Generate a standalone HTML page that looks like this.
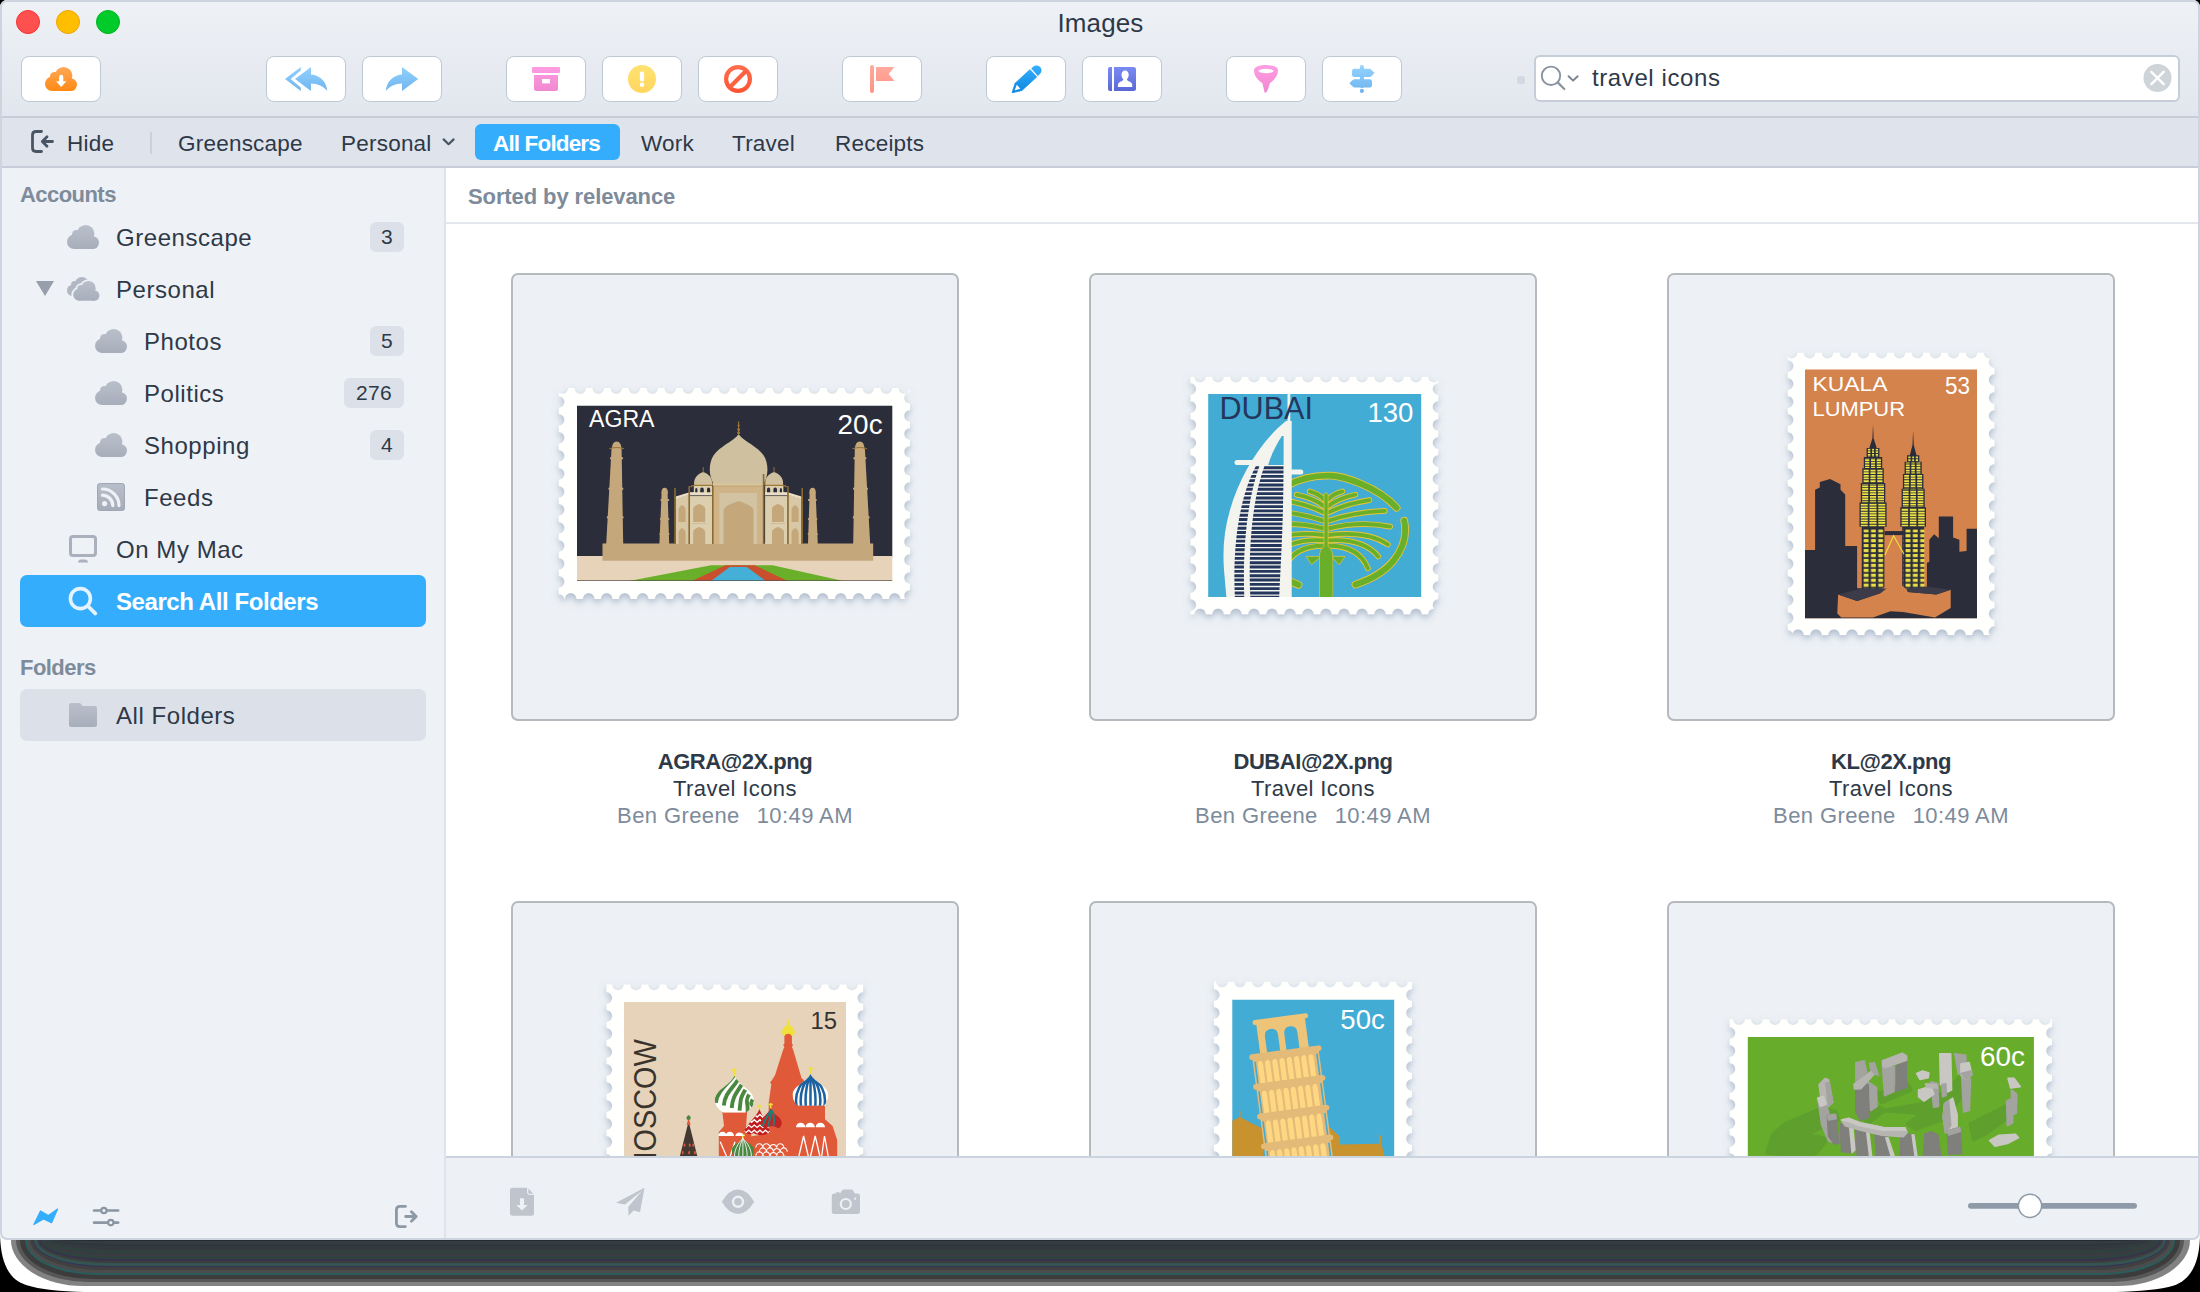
<!DOCTYPE html>
<html><head><meta charset="utf-8"><title>Images</title>
<style>
*{box-sizing:border-box;margin:0;padding:0}
html{background:#000}
html,body{width:2200px;height:1292px;overflow:hidden;font-family:"Liberation Sans",sans-serif;color:#2e3948}
.abs{position:absolute}
.bd{position:absolute;top:1240px;z-index:-1}
#win{position:absolute;left:0;top:0;width:2200px;height:1240px;border-radius:7px;background:#cdd4df;overflow:hidden}
#inner{position:absolute;left:0;top:0;width:2200px;height:1240px;border-radius:7px;overflow:hidden;background:#fff}
#frame{position:absolute;left:0;top:0;width:2200px;height:1240px;border-radius:7px;box-shadow:inset 0 0 0 2px #cdd4df;pointer-events:none}
#titlebar{position:absolute;left:0;top:0;width:100%;height:116px;background:linear-gradient(#eef1f5,#e2e6ee)}
#tbline{position:absolute;left:0;top:116px;width:100%;height:2px;background:#c6cdd9}
#tabbar{position:absolute;left:0;top:118px;width:100%;height:48px;background:#dfe3ec}
#tabline{position:absolute;left:0;top:166px;width:100%;height:2px;background:#c6cdd9}
.tl{position:absolute;top:10px;width:24px;height:24px;border-radius:50%}
.tbtn{position:absolute;top:56px;width:80px;height:46px;background:#fff;border:1.500px solid #bfc8d5;border-radius:8px}
.tbtn svg{position:absolute;left:0;top:0}
.tab{position:absolute;top:128.500px;font-size:22.500px;line-height:30px;white-space:nowrap;letter-spacing:.22px}
#sidebar{position:absolute;left:0;top:168px;width:444px;height:1072px;background:#eef1f5}
#sideline{position:absolute;left:444px;top:168px;width:2px;height:1072px;background:#dfe4ec}
.sh{position:absolute;left:18px;font-size:22px;font-weight:bold;color:#7d8b9b;line-height:28px;letter-spacing:-.55px}
.si{position:absolute;margin-top:1px;font-size:24px;line-height:32px;white-space:nowrap;letter-spacing:.55px}
.badge{position:absolute;height:30px;background:#dce1e9;border-radius:6px;font-size:21px;line-height:30px;text-align:center;letter-spacing:.3px}
#content{position:absolute;left:446px;top:168px;width:1754px;height:989px;background:#fff;overflow:hidden}
.card{position:absolute;width:448px;height:448px;background:#edf1f5;border:2px solid #b6b9bd;border-radius:7px;overflow:hidden}
.cap{position:absolute;width:448px;text-align:center;font-size:22px;line-height:27px;white-space:nowrap;letter-spacing:.4px}
.cap b{font-weight:bold;letter-spacing:-.45px}
.cap .m{color:#7d8b9b}
#bottombar{position:absolute;left:446px;top:1156px;width:1754px;height:84px;background:#edf1f5;border-top:2px solid #cbd3de}
</style></head><body>
<div id="win"><div id="inner">
 <div id="titlebar"></div><div id="tbline"></div><div id="tabbar"></div><div id="tabline"></div>
 <div class="tl" style="left:16px;background:#ff5050;border:1px solid #f9302e"></div>
 <div class="tl" style="left:56px;background:#ffbe00;border:1px solid #f0a500"></div>
 <div class="tl" style="left:96px;background:#00cb2a;border:1px solid #00b31c"></div>
 <div class="abs" style="left:1057.500px;top:6px;font-size:26px;line-height:34px;letter-spacing:.1px;color:#2e3948">Images</div>

 <div class="tbtn" style="left:21px" id="b1"></div>
 <div class="tbtn" style="left:266px" id="b2"></div>
 <div class="tbtn" style="left:362px" id="b3"></div>
 <div class="tbtn" style="left:506px" id="b4"></div>
 <div class="tbtn" style="left:602px" id="b5"></div>
 <div class="tbtn" style="left:698px" id="b6"></div>
 <div class="tbtn" style="left:842px" id="b7"></div>
 <div class="tbtn" style="left:986px" id="b8"></div>
 <div class="tbtn" style="left:1082px" id="b9"></div>
 <div class="tbtn" style="left:1226px" id="b10"></div>
 <div class="tbtn" style="left:1322px" id="b11"></div>
 <div class="abs" id="search" style="left:1534px;top:54.500px;width:646px;height:47px;background:#fff;border:2px solid #c5cdd9;border-radius:6px"></div>
 <div class="abs" style="left:1592px;top:62px;font-size:24px;line-height:32px;letter-spacing:.6px;color:#2e3948">travel icons</div>

 <div class="tab" style="left:67px">Hide</div>
 <div class="abs" style="left:150px;top:132px;width:2px;height:22px;background:#cbd1db"></div>
 <div class="tab" style="left:178px">Greenscape</div>
 <div class="tab" style="left:341px">Personal</div>
 <div class="abs" style="left:475px;top:124px;width:145px;height:36px;border-radius:6px;background:#34aefc"></div>
 <div class="tab" style="left:493px;color:#fff;font-weight:bold;letter-spacing:-.85px">All Folders</div>
 <div class="tab" style="left:641px">Work</div>
 <div class="tab" style="left:732px">Travel</div>
 <div class="tab" style="left:835px">Receipts</div>

 <svg class="abs" style="left:0;top:50px" width="2200" height="60" viewBox="0 50 2200 60">
  <defs>
   <linearGradient id="gor" gradientUnits="userSpaceOnUse" x1="0" y1="0" x2="0" y2="24"><stop offset="0" stop-color="#ffa858"/><stop offset="1" stop-color="#ff8a14"/></linearGradient>
   <linearGradient id="gbl" gradientUnits="userSpaceOnUse" x1="0" y1="66" x2="0" y2="92"><stop offset="0" stop-color="#92d2ff"/><stop offset="1" stop-color="#6fb4ee"/></linearGradient>
   <linearGradient id="gpk" gradientUnits="userSpaceOnUse" x1="0" y1="66" x2="0" y2="92"><stop offset="0" stop-color="#ff9ce2"/><stop offset="1" stop-color="#f088d0"/></linearGradient>
   <linearGradient id="gye" gradientUnits="userSpaceOnUse" x1="0" y1="65" x2="0" y2="93"><stop offset="0" stop-color="#ffe272"/><stop offset="1" stop-color="#ffd65e"/></linearGradient>
   <linearGradient id="grd" gradientUnits="userSpaceOnUse" x1="0" y1="65" x2="0" y2="93"><stop offset="0" stop-color="#ff6e4e"/><stop offset="1" stop-color="#ff5232"/></linearGradient>
   <linearGradient id="gfl" gradientUnits="userSpaceOnUse" x1="0" y1="65" x2="0" y2="93"><stop offset="0" stop-color="#ffaa9e"/><stop offset="1" stop-color="#ff9286"/></linearGradient>
   <linearGradient id="gpn" gradientUnits="userSpaceOnUse" x1="0" y1="65" x2="0" y2="93"><stop offset="0" stop-color="#38b0ff"/><stop offset="1" stop-color="#0a86dc"/></linearGradient>
   <linearGradient id="gbk" gradientUnits="userSpaceOnUse" x1="0" y1="67" x2="0" y2="91"><stop offset="0" stop-color="#7a8af2"/><stop offset="1" stop-color="#5a68d6"/></linearGradient>
  </defs>
  <!-- 1 cloud download -->
  <g transform="translate(45,67)"><use href="#cloud" fill="url(#gor)"/><path d="M16.200 7.800Q18.300 7.800 18.300 9.900V14.300H21.400L16.200 20L11 14.300H14.100V9.900Q14.100 7.800 16.200 7.800Z" fill="#fff"/></g>
  <!-- 2 reply all -->
  <path d="M285 79L300.800 66.900V70.600L290.600 79L300.800 87.400V91Z" fill="url(#gbl)"/>
  <path d="M295 79L311 66.900V74.600C320.500 75.600 326.600 82 327.200 91C323 86 318 83.600 311 83.400V91Z" fill="url(#gbl)"/>
  <!-- 3 forward -->
  <path d="M418.200 79L402 66.900V74.600C392.500 75.600 386.400 82 385.900 91C390 86 395 83.600 402 83.400V91Z" fill="url(#gbl)"/>
  <!-- 4 archive -->
  <rect x="532" y="67" width="28" height="6" rx="1" fill="url(#gpk)"/>
  <path d="M534 75H558V88.500Q558 91 555.500 91H536.500Q534 91 534 88.500Z" fill="url(#gpk)"/><rect x="542" y="79" width="8" height="4.400" fill="#fff"/>
  <!-- 5 alert -->
  <circle cx="642" cy="79" r="14" fill="url(#gye)"/><rect x="639.900" y="71.400" width="4.200" height="10.200" rx="2.100" fill="#fff"/><circle cx="642" cy="84.700" r="2.300" fill="#fff"/>
  <!-- 6 block -->
  <circle cx="738" cy="79" r="11.900" fill="none" stroke="url(#grd)" stroke-width="4.200"/><path d="M729.800 87.200L746.200 70.800" stroke="#ff6040" stroke-width="4.200"/>
  <!-- 7 flag -->
  <rect x="870" y="65" width="4" height="28" rx="2" fill="url(#gfl)"/><path d="M876 67.600Q876 67 876.600 67H893.200Q894.400 67 893.600 67.900L888.600 74L893.600 80.100Q894.400 81 893.200 81H876.600Q876 81 876 80.400Z" fill="url(#gfl)"/>
  <!-- 8 pencil -->
  <path d="M1012.1 92.7L1015.1 83.2L1030.0 69.6L1036.7 77.0L1021.8 90.6Z" fill="url(#gpn)" stroke="url(#gpn)" stroke-width=".8" stroke-linejoin="round"/><path d="M1031.2 68.5L1033.1 66.8L1033.1 66.8L1034.2 66.0L1035.4 65.6L1036.7 65.5L1038.0 65.7L1039.2 66.2L1040.2 67.1L1040.9 68.1L1041.4 69.4L1041.5 70.7L1041.2 72.0L1040.7 73.1L1039.8 74.1L1039.8 74.1L1037.9 75.9Z" fill="url(#gpn)"/><path d="M1014.6 90.4L1016.8 84.8L1020.4 88.8Z" fill="#fff"/>
  <!-- 9 contacts -->
  <path d="M1110 67H1112V91H1110Q1108 91 1108 89V69Q1108 67 1110 67Z" fill="url(#gbk)"/>
  <path d="M1114 67H1133.500Q1136 67 1136 69.500V88.500Q1136 91 1133.500 91H1114Z" fill="url(#gbk)"/>
  <path d="M1125.100 70.600C1127.300 70.600 1128.700 72.300 1128.700 74.700C1128.700 76.600 1128 78.200 1127 79.100C1127 80.300 1127.400 80.800 1128.600 81.300C1130.800 82.100 1132.300 82.900 1132.300 85.200V87H1117.900V85.200C1117.900 82.900 1119.400 82.100 1121.600 81.300C1122.800 80.800 1123.200 80.300 1123.200 79.100C1122.200 78.200 1121.500 76.600 1121.500 74.700C1121.500 72.300 1122.900 70.600 1125.100 70.600Z" fill="#fff"/>
  <!-- 10 funnel -->
  <path d="M1254 70.200C1254 63.300 1278 63.300 1278 70.200C1278 76 1274 80.300 1270 83L1267.600 90.200Q1266.200 93.200 1264.700 92.800L1262.300 83C1258 80.300 1254 76 1254 70.200Z" fill="url(#gpk)"/><ellipse cx="1266" cy="71" rx="7.600" ry="2.200" fill="#fff"/>
  <!-- 11 signpost -->
  <g fill="url(#gbl)"><rect x="1359.900" y="65" width="4" height="23" rx="2"/><circle cx="1361.900" cy="90.900" r="2.100"/>
  <path d="M1354.500 68.800H1369.500Q1370.300 68.800 1371 69.400L1374 72.200Q1374.800 72.900 1374 73.600L1371 76.400Q1370.300 77 1369.500 77H1354.500Q1352 77 1352 74.500V71.300Q1352 68.800 1354.500 68.800Z"/>
  <path d="M1369.500 79.200H1354.500Q1353.700 79.200 1353 79.800L1350 82.600Q1349.200 83.300 1350 84L1353 86.800Q1353.700 87.400 1354.500 87.400H1369.500Q1372 87.400 1372 84.900V81.700Q1372 79.200 1369.500 79.200Z"/></g>
  <!-- search -->
  <rect x="1517" y="76" width="8" height="8" rx="2.500" fill="#d3d9e3"/>
  <circle cx="1551" cy="75.800" r="9.200" fill="none" stroke="#8a929e" stroke-width="1.900"/><path d="M1557.700 82.400L1564.300 89" stroke="#8a929e" stroke-width="2.200" stroke-linecap="round"/>
  <path d="M1568.600 76.200L1573.100 80.600L1577.600 76.200" fill="none" stroke="#7c8692" stroke-width="2" stroke-linecap="round" stroke-linejoin="round"/>
  <circle cx="2157.500" cy="78" r="14" fill="#cfd4d8"/><path d="M2151.300 71.800L2163.700 84.200M2163.700 71.800L2151.300 84.200" stroke="#fff" stroke-width="2.400" stroke-linecap="round"/>
 </svg>
 <!-- tabbar icons -->
 <svg class="abs" style="left:28px;top:128px" width="30" height="28" viewBox="28 128 30 28"><g fill="none" stroke="#4a5564" stroke-width="2.800" stroke-linecap="round" stroke-linejoin="round"><path d="M41.500 131.500H36Q32.500 131.500 32.500 135V148Q32.500 151.500 36 151.500H41.500"/><path d="M52.500 141.500H42.500M47 136.800L42.300 141.500L47 146.200"/></g></svg>
 <svg class="abs" style="left:440px;top:134px" width="18" height="14" viewBox="440 134 18 14"><path d="M443.600 139.400L448.600 144.200L453.600 139.400" fill="none" stroke="#4a5564" stroke-width="2.200" stroke-linecap="round" stroke-linejoin="round"/></svg>
 <div id="sidebar"></div><div id="sideline"></div>
 <svg width="0" height="0" style="position:absolute"><defs>
  <linearGradient id="gcl" gradientUnits="userSpaceOnUse" x1="0" y1="0" x2="0" y2="26"><stop offset="0" stop-color="#b9bfca"/><stop offset="1" stop-color="#a6adba"/></linearGradient>
  <g id="cloud"><circle cx="7.2" cy="16.8" r="7.2"/><circle cx="9.6" cy="9.6" r="4.6"/><circle cx="18.6" cy="8.8" r="8.8"/><circle cx="25.6" cy="17.6" r="6.4"/><rect x="7" y="12" width="19" height="12"/></g>
 </defs></svg>
 <div class="sh" style="top:180.700px;left:20px">Accounts</div>

 <svg class="abs" style="left:67px;top:225px" width="32" height="24" viewBox="0 0 32 24"><use href="#cloud" fill="url(#gcl)"/></svg>
 <div class="si" style="left:116px;top:221px">Greenscape</div>
 <div class="badge" style="left:370px;top:222px;width:34px">3</div>

 <svg class="abs" style="left:36px;top:281px" width="18" height="15" viewBox="0 0 18 15"><path d="M0 0H18L9 15Z" fill="#979fac"/></svg>
 <svg class="abs" style="left:66px;top:276px" width="34" height="26" viewBox="0 0 34 26">
  <g transform="translate(1,1) scale(0.8)"><use href="#cloud" fill="#b1b8c4"/></g>
  <g transform="translate(7.2,5) scale(0.82)"><use href="#cloud" fill="#eef1f5" stroke="#eef1f5" stroke-width="4.5"/><use href="#cloud" fill="url(#gcl)"/></g>
 </svg>
 <div class="si" style="left:116px;top:273px">Personal</div>

 <svg class="abs" style="left:95px;top:329px" width="32" height="24" viewBox="0 0 32 24"><use href="#cloud" fill="url(#gcl)"/></svg>
 <div class="si" style="left:144px;top:325px">Photos</div>
 <div class="badge" style="left:370px;top:326px;width:34px">5</div>

 <svg class="abs" style="left:95px;top:381px" width="32" height="24" viewBox="0 0 32 24"><use href="#cloud" fill="url(#gcl)"/></svg>
 <div class="si" style="left:144px;top:377px">Politics</div>
 <div class="badge" style="left:344px;top:378px;width:60px">276</div>

 <svg class="abs" style="left:95px;top:433px" width="32" height="24" viewBox="0 0 32 24"><use href="#cloud" fill="url(#gcl)"/></svg>
 <div class="si" style="left:144px;top:429px">Shopping</div>
 <div class="badge" style="left:370px;top:430px;width:34px">4</div>

 <svg class="abs" style="left:97px;top:483px" width="28" height="28" viewBox="0 0 28 28"><rect width="28" height="28" rx="3.5" fill="url(#gcl)"/><rect x=".5" y=".5" width="27" height="27" rx="3" fill="none" stroke="#a0a7b4"/>
  <circle cx="7.6" cy="20.6" r="2.6" fill="#eef1f5"/><path d="M5.4 12.2A10.4 10.4 0 0 1 15.8 22.6" fill="none" stroke="#eef1f5" stroke-width="3.2" stroke-linecap="round"/><path d="M5.4 6A16.6 16.6 0 0 1 22 22.6" fill="none" stroke="#eef1f5" stroke-width="3.2" stroke-linecap="round"/></svg>
 <div class="si" style="left:144px;top:481px">Feeds</div>

 <svg class="abs" style="left:69px;top:535px" width="28" height="28" viewBox="0 0 28 28"><rect x="1.5" y="1.5" width="25" height="19" rx="2.5" fill="none" stroke="#aab1bd" stroke-width="3"/><path d="M9 27.6C9 25.6 10.5 24.6 12 24.6H16C17.500 24.6 19 25.6 19 27.6Z" fill="#aab1bd"/></svg>
 <div class="si" style="left:116px;top:533px">On My Mac</div>

 <div class="abs" style="left:20px;top:575px;width:406px;height:52px;border-radius:7px;background:#34aefc"></div>
 <svg class="abs" style="left:68px;top:586px" width="30" height="30" viewBox="0 0 30 30"><circle cx="12.4" cy="12.6" r="10" fill="none" stroke="#e4f3ff" stroke-width="3.6"/><path d="M19.8 20L27.2 27.4" stroke="#e4f3ff" stroke-width="3.8" stroke-linecap="round"/></svg>
 <div class="si" style="left:116px;top:585px;color:#fff;font-weight:bold;letter-spacing:-.43px">Search All Folders</div>

 <div class="sh" style="top:653.700px;left:20px">Folders</div>
 <div class="abs" style="left:20px;top:689px;width:406px;height:52px;border-radius:7px;background:#dce1e9"></div>
 <svg class="abs" style="left:69px;top:703px" width="28" height="24" viewBox="0 0 28 24"><path d="M0 2.5Q0 0 2.5 0H9.500Q11.500 0 12.5 1.4L13.6 3H25.500Q28 3 28 5.500V21.500Q28 24 25.500 24H2.500Q0 24 0 21.500Z" fill="url(#gcl)"/></svg>
 <div class="si" style="left:116px;top:699px">All Folders</div>

 <svg class="abs" style="left:30px;top:1204px" width="32" height="26" viewBox="30 1204 32 26"><path d="M33.900 1224.600L40.500 1211L48.400 1215.400L57.600 1209.100L51.600 1222.700L43.500 1218.900Z" fill="#34aefc" stroke="#34aefc" stroke-width="1.200" stroke-linejoin="round"/></svg>
 <svg class="abs" style="left:90px;top:1204px" width="32" height="26" viewBox="90 1204 32 26"><g fill="none" stroke="#8a96a3" stroke-width="2.600" stroke-linecap="round"><path d="M94 1210.500H100.500M107.300 1210.500H118.200M94 1222.600H107.400M114.200 1222.600H118.200"/><circle cx="103.900" cy="1210.500" r="2.700" stroke-width="2.200"/><circle cx="110.800" cy="1222.600" r="2.700" stroke-width="2.200"/></g></svg>
 <svg class="abs" style="left:390px;top:1200px" width="32" height="32" viewBox="390 1200 32 32"><g fill="none" stroke="#8e99a6" stroke-width="2.800" stroke-linecap="round" stroke-linejoin="round"><path d="M405.400 1206.400H400Q396.400 1206.400 396.400 1210V1223Q396.400 1226.600 400 1226.600H405.400"/><path d="M405.600 1216.500H416M411.400 1211.700L416.200 1216.500L411.400 1221.300"/></g></svg>
 <div id="content"></div>
 <div class="abs" style="left:468px;top:181.700px;font-size:22px;font-weight:bold;line-height:30px;color:#7d8b9b;letter-spacing:-.1px;white-space:nowrap">Sorted by relevance</div>
 <div class="abs" style="left:446px;top:222px;width:1754px;height:2px;background:#e4e8ee"></div>
 <svg width="0" height="0" style="position:absolute"><defs>
  <filter id="sh" x="-10%" y="-10%" width="120%" height="125%"><feDropShadow dx="0" dy="3.5" stdDeviation="3.6" flood-color="#7086a6" flood-opacity=".5"/></filter>
 </defs></svg>
 <div class="card" style="left:511px;top:273px" id="c1"></div>
 <div class="card" style="left:1089px;top:273px" id="c2"></div>
 <div class="card" style="left:1667px;top:273px" id="c3"></div>
 <div class="card" style="left:511px;top:901px" id="c4"></div>
 <div class="card" style="left:1089px;top:901px" id="c5"></div>
 <div class="card" style="left:1667px;top:901px" id="c6"></div>
 <div class="cap" style="left:511px;top:748px"><b>AGRA@2X.png</b><br>Travel Icons<br><span class="m">Ben Greene<span style="margin-left:17px">10:49 AM</span></span></div>
 <div class="cap" style="left:1089px;top:748px"><b>DUBAI@2X.png</b><br>Travel Icons<br><span class="m">Ben Greene<span style="margin-left:17px">10:49 AM</span></span></div>
 <div class="cap" style="left:1667px;top:748px"><b>KL@2X.png</b><br>Travel Icons<br><span class="m">Ben Greene<span style="margin-left:17px">10:49 AM</span></span></div>
 <svg class="abs" style="left:513px;top:275px" width="444" height="444" viewBox="513 275 444 444">
  <defs><mask id="ma" maskUnits="userSpaceOnUse" x="550" y="380" width="370" height="230"><rect x="558.600" y="388" width="351.400" height="211" fill="#fff"/><g fill="none" stroke="#000" stroke-width="11.800" stroke-linecap="round" stroke-dasharray="0 18"><path d="M562.300 388H915"/><path d="M570.700 599H915"/><path d="M558.600 401.800V605"/><path d="M910 397.800V605"/></g></mask>
  <clipPath id="ca"><rect x="577" y="405.800" width="315.300" height="175.200"/></clipPath></defs>
  <g filter="url(#sh)"><rect x="558.600" y="388" width="351.400" height="211" fill="#fffffd" mask="url(#ma)"/></g>
  <g clip-path="url(#ca)">
   <rect x="577" y="405" width="316" height="152" fill="#2b2d3a"/>
   <rect x="577" y="556" width="316" height="26" fill="#e6d3ba"/>
   <path d="M711 565.200H772.600L845.600 581.500H626.600Z" fill="#6aaf2a"/>
   <path d="M725.400 565.200H754.800L788.600 581.500H690.700Z" fill="#c8502e"/>
   <path d="M729.800 567H746.800L766.300 581.500H710.300Z" fill="#44b0d8"/>
   <rect x="577" y="580.300" width="316" height="1" fill="#5a5048"/>
   <!-- tall minarets -->
   <g id="tm" fill="#c4a77a"><path d="M606.200 544L611.500 449H621.600L623.200 544Z"/><path d="M612 449Q612 441.400 616.600 441.400Q621.400 441.400 621.400 449Z"/><rect x="610" y="457" width="13" height="2.600" rx="1.300"/><rect x="608.400" y="487.400" width="15" height="2.600" rx="1.300"/><rect x="606.800" y="516" width="16.800" height="2.600" rx="1.300"/><path d="M609.500 448.800Q616.600 446.200 623.800 448.800" fill="none" stroke="#a07838" stroke-width="1.200"/></g>
   <use href="#tm" transform="translate(1476.400,0) scale(-1,1)"/>
   <!-- small minarets -->
   <g id="sm" fill="#c4a77a"><path d="M659.400 544L661.600 493H667.600L669.200 544Z"/><path d="M661.300 493.500Q661.300 487.700 664.600 487.700Q668 487.700 668 493.500Z"/><rect x="660.300" y="499" width="9" height="2" rx="1"/><rect x="659.800" y="518" width="9.600" height="2" rx="1"/><rect x="659.300" y="533" width="10.200" height="2" rx="1"/></g>
   <use href="#sm" transform="translate(1477.200,0) scale(-1,1)"/>
   <!-- platform -->
   <rect x="602.500" y="543.500" width="270.700" height="17.200" fill="#c4a77a"/>
   <!-- wings -->
   <g id="wing">
    <path d="M675.700 498.200L689.600 494.500V544H675.700Z" fill="#d8c8a6"/>
    <path d="M675.700 496.500L689.600 492.300V494.700L675.700 498.800Z" fill="#ece0c6"/>
    <rect x="689.600" y="494" width="22.500" height="50" fill="#dccfb0"/>
    <rect x="689.600" y="492.200" width="22.500" height="2.600" fill="#ece0c6"/>
    <path d="M689.600 495.600H712" stroke="#2b2d3a" stroke-width=".7"/>
    <path d="M693.200 522V509Q693.200 506 699.200 504Q705.200 506 705.200 509V522Z" fill="#c4a77a"/>
    <path d="M693.200 544V532Q693.200 529 699.200 527Q705.200 529 705.200 532V544Z" fill="#c4a77a"/>
    <path d="M678.600 522V510Q678.600 507 682 505Q685.600 507 685.600 510V522Z" fill="#c4a77a"/>
    <path d="M678.600 544V533Q678.600 530 682 528Q685.600 530 685.600 533V544Z" fill="#c4a77a"/>
    <path d="M692 523.600H706.500" stroke="#cdb488" stroke-width=".8"/>
    <!-- small dome + chhatri -->
    <path d="M694.200 485.200C693.200 478 698 473.800 703.200 472.100C708.400 473.800 713 478 712 485.200Z" fill="#cfc0a0"/>
    <path d="M703.200 467V472.500" stroke="#a07838" stroke-width=".9"/>
    <rect x="693.800" y="486" width="18.200" height="7" fill="#dccfb0"/>
    <path d="M695.200 493V489.800Q695.200 488 696.300 488Q697.400 488 697.400 489.800V493ZM700.200 493V489.600Q700.200 487.600 702 487.600Q703.800 487.600 703.800 489.600V493ZM707 493V489.600Q707 487.600 708.600 487.600Q710.200 487.600 710.200 489.600V493Z" fill="#2b2d3a"/>
    <rect x="692.600" y="492.300" width="19.600" height="1.600" fill="#ece0c6"/>
    <path d="M690.600 487.200Q691.200 485.400 694 485.300H712" fill="none" stroke="#a07838" stroke-width="1.300"/>
    <g stroke="#8a6a30" stroke-width="1.600"><path d="M675 488V544"/><path d="M689.200 486V544"/><path d="M712.800 474V485"/></g>
   </g>
   <use href="#wing" transform="translate(1477.200,0) scale(-1,1)"/>
   <!-- dome -->
   <path d="M713.800 483.500C708.300 476 708.600 463 713.500 455.500C719 447 733 441.500 738.600 434.300C744.200 441.500 758.200 447 763.700 455.500C768.600 463 768.900 476 763.400 483.500Z" fill="#cfc0a0"/>
   <path d="M738.600 421.500V434.500" stroke="#a07838" stroke-width="1.100"/><circle cx="738.600" cy="425.600" r="1.100" fill="#a07838"/><circle cx="738.600" cy="429.600" r="1.400" fill="#a07838"/><circle cx="738.600" cy="432.800" r="1.500" fill="#a07838"/>
   <!-- iwan -->
   <rect x="712.800" y="483" width="50.600" height="61" fill="#d0b487"/>
   <rect x="712.800" y="483" width="50.600" height="2.600" fill="#d6c49e"/>
   <path d="M712.800 486.200H763.400" stroke="#bfa06a" stroke-width=".7"/>
   <rect x="719.200" y="493" width="37.800" height="51" fill="#d2c3a2"/>
   <path d="M723.600 544V510.500C723.600 506.500 731 503.500 738.600 501C746 503.500 753.500 506.500 753.500 510.500V544Z" fill="#c4a77a"/>
   <g stroke="#8a6a30" stroke-width="1.600"><path d="M712.800 486V544"/><path d="M763.600 474V544"/></g>
   <text x="589" y="427.200" font-size="23.500" fill="#fff" font-family="Liberation Sans,sans-serif" textLength="65.500" lengthAdjust="spacingAndGlyphs">AGRA</text>
   <text x="837.600" y="434.200" font-size="27" fill="#fff" font-family="Liberation Sans,sans-serif" textLength="45" lengthAdjust="spacingAndGlyphs">20c</text>
  </g>
 </svg>
 <svg class="abs" style="left:1091px;top:275px" width="444" height="444" viewBox="1091 275 444 444">
  <defs><mask id="mb" maskUnits="userSpaceOnUse" x="1180" y="368" width="270" height="256"><rect x="1190.300" y="376.700" width="248.200" height="237.800" fill="#fff"/><g fill="none" stroke="#000" stroke-width="11.800" stroke-linecap="round" stroke-dasharray="0 18"><path d="M1200 376.700H1445"/><path d="M1200 614.500H1445"/><path d="M1190.300 389V620"/><path d="M1438.500 389V620"/></g></mask>
  <clipPath id="cb"><rect x="1208.200" y="393.900" width="213" height="203.100"/></clipPath>
  <clipPath id="csail"><path d="M1286 420.800C1262 440 1240 475 1230 510C1224 530 1222.500 550 1224 570L1226.400 597.200H1286Z"/></clipPath></defs>
  <g filter="url(#sh)"><rect x="1190.300" y="376.700" width="248.200" height="237.800" fill="#fffffd" mask="url(#mb)"/></g>
  <g clip-path="url(#cb)">
   <rect x="1208" y="393" width="214" height="205" fill="#42acd4"/>
   <g fill="none" stroke-linecap="round"><path d="M1327.8 499.5Q1333.8 493.6 1342.4 491.4M1324.3 499.5Q1318.4 493.6 1309.7 491.4M1328.1 506.1Q1339.2 497.9 1355.4 494.7M1324.0 506.1Q1313.0 497.9 1296.7 494.7M1328.1 512.6Q1346.8 503.3 1369.5 500.1M1324.0 512.6Q1305.4 503.3 1282.6 500.1M1328.1 520.9Q1354.3 512.0 1384.7 510.9M1324.0 520.9Q1297.8 512.0 1267.4 510.9M1328.1 528.5Q1360.8 520.7 1390.1 526.6M1324.0 528.5Q1291.3 520.7 1262.0 526.6M1328.1 535.0Q1367.3 530.4 1387.9 544.5M1324.0 535.0Q1284.8 530.4 1264.2 544.5M1328.1 540.4Q1363.0 538.0 1378.2 556.4M1324.0 540.4Q1289.1 538.0 1273.9 556.4M1328.1 545.8Q1358.7 545.6 1367.9 568.4M1324.0 545.8Q1293.5 545.6 1284.2 568.4" stroke="#e6c63c" stroke-width="5.700"/><path d="M1287.2 485.5C1304.5 476.3 1320.8 475.2 1331.6 475.7S1377.1 486.0 1396.6 507.7M1404.2 520.7C1407.4 535.8 1403.1 548.9 1393.4 560.8S1371.7 579.2 1355.4 584.6M1287.2 580.3L1298.5 584.8" stroke="#e6c63c" stroke-width="7.700"/><path d="M1327.8 499.5Q1333.8 493.6 1342.4 491.4M1324.3 499.5Q1318.4 493.6 1309.7 491.4M1328.1 506.1Q1339.2 497.9 1355.4 494.7M1324.0 506.1Q1313.0 497.9 1296.7 494.7M1328.1 512.6Q1346.8 503.3 1369.5 500.1M1324.0 512.6Q1305.4 503.3 1282.6 500.1M1328.1 520.9Q1354.3 512.0 1384.7 510.9M1324.0 520.9Q1297.8 512.0 1267.4 510.9M1328.1 528.5Q1360.8 520.7 1390.1 526.6M1324.0 528.5Q1291.3 520.7 1262.0 526.6M1328.1 535.0Q1367.3 530.4 1387.9 544.5M1324.0 535.0Q1284.8 530.4 1264.2 544.5M1328.1 540.4Q1363.0 538.0 1378.2 556.4M1324.0 540.4Q1289.1 538.0 1273.9 556.4M1328.1 545.8Q1358.7 545.6 1367.9 568.4M1324.0 545.8Q1293.5 545.6 1284.2 568.4" stroke="#6aaf2a" stroke-width="3.900"/><path d="M1287.2 485.5C1304.5 476.3 1320.8 475.2 1331.6 475.7S1377.1 486.0 1396.6 507.7M1404.2 520.7C1407.4 535.8 1403.1 548.9 1393.4 560.8S1371.7 579.2 1355.4 584.6M1287.2 580.3L1298.5 584.8" stroke="#6aaf2a" stroke-width="5.900"/></g>
   <path d="M1306.100 556.400H1319.500V558L1311.500 564.600ZM1332.700 556.400H1345.100L1339.200 564.900L1332.700 558Z" fill="#6aaf2a" stroke="#e6c63c" stroke-width=".700"/><path d="M1319.500 598V556.500Q1319.500 549.500 1324 546.500V495Q1324 493 1326.050 493Q1328.100 493 1328.100 495V546.500Q1332.700 549.500 1332.700 556.500V598Z" fill="#6aaf2a" stroke="#e6c63c" stroke-width=".700"/><path d="M1320 560H1332.300V598H1320Z" fill="#6aaf2a"/>
   <path d="M1287.500 393V421H1286C1262 440 1240 475 1230 510C1224 530 1222.500 550 1224 570L1226.400 597.500H1291.700V421H1290.300V393Z" fill="#f4f4ee"/>
   <path d="M1281.900 436C1276 445 1271 455 1268.200 465H1283.600V436Z" fill="#42acd4"/>
   <rect x="1234.500" y="460" width="22" height="5" rx="2.500" fill="#f4f4ee"/><rect x="1289" y="469.400" width="14.300" height="5" rx="2.500" fill="#f4f4ee"/>
   <clipPath id="ccol"><path d="M1234.900 597.500C1232.500 550 1238 500 1256 465.800H1259.500C1247 500 1242.500 550 1244.300 597.500ZM1250.300 597.500C1248 550 1252 500 1264.500 465.800H1283.500C1283.500 520 1281 560 1279.200 597.500Z"/></clipPath>
   <path d="M1230 467.70H1286M1230 472.02H1286M1230 476.34H1286M1230 480.66H1286M1230 484.98H1286M1230 489.30H1286M1230 493.62H1286M1230 497.94H1286M1230 502.26H1286M1230 506.58H1286M1230 510.90H1286M1230 515.22H1286M1230 519.54H1286M1230 523.86H1286M1230 528.18H1286M1230 532.50H1286M1230 536.82H1286M1230 541.14H1286M1230 545.46H1286M1230 549.78H1286M1230 554.10H1286M1230 558.42H1286M1230 562.74H1286M1230 567.06H1286M1230 571.38H1286M1230 575.70H1286M1230 580.02H1286M1230 584.34H1286M1230 588.66H1286M1230 592.98H1286M1230 597.30H1286" stroke="#24365c" stroke-width="2.900" clip-path="url(#ccol)"/>
   <text x="1219.500" y="418.500" font-size="30.600" fill="#24365c" font-family="Liberation Sans,sans-serif" textLength="93.500" lengthAdjust="spacingAndGlyphs">DUBAI</text>
   <path d="M1287.500 393V421H1290V393Z" fill="#f4f4ee" opacity=".0"/>
   <text x="1367.400" y="422.300" font-size="27" fill="#fff" font-family="Liberation Sans,sans-serif" textLength="46" lengthAdjust="spacingAndGlyphs">130</text>
  </g>
 </svg>
 <svg class="abs" style="left:1669px;top:275px" width="444" height="444" viewBox="1669 275 444 444">
  <defs><mask id="mc" maskUnits="userSpaceOnUse" x="1778" y="344" width="226" height="300"><rect x="1787.600" y="352.500" width="207" height="282.700" fill="#fff"/><g fill="none" stroke="#000" stroke-width="11.800" stroke-linecap="round" stroke-dasharray="0 18"><path d="M1791.500 352.500H2000"/><path d="M1798 635.200H2000"/><path d="M1787.600 366V640"/><path d="M1994.600 362V640"/></g></mask>
  <clipPath id="cc"><rect x="1805" y="369.600" width="172" height="248.600"/></clipPath>
  <pattern id="pw" patternUnits="userSpaceOnUse" x="1862.300" y="529.200" width="7.300" height="4.950"><rect x="1.400" y="0" width="4.800" height="3.200" fill="#e8dc48"/></pattern>
  <pattern id="pw2" patternUnits="userSpaceOnUse" x="1904.200" y="529.200" width="7.300" height="4.950"><rect x="1.400" y="0" width="4.800" height="3.200" fill="#e8dc48"/></pattern>
  <pattern id="pu" patternUnits="userSpaceOnUse" x="1862" y="440" width="4.200" height="2.500"><rect x=".500" y="0" width="3.300" height="1.700" fill="#e8dc48"/></pattern>
  </defs>
  <g filter="url(#sh)"><rect x="1787.600" y="352.500" width="207" height="282.700" fill="#fffffd" mask="url(#mc)"/></g>
  <g clip-path="url(#cc)">
   <rect x="1804" y="369" width="174" height="250" fill="#d4834c"/>
   <path d="M1803.2 619.9L1803.2 550.1L1815.1 550.1L1815.1 489.8L1819.8 487.4L1819.8 481.9L1830.1 479.0L1840.5 484.3L1840.5 489.8L1845.2 494.6L1845.2 546.1L1857.1 546.1L1857.1 588.2L1926.9 588.2L1926.9 562.8L1929.3 562.0L1929.3 539.8L1934.1 534.2L1938.8 538.2L1938.8 516.5L1953.1 516.5L1953.1 537.4L1959.4 539.8L1959.4 551.7L1966.6 550.9L1966.6 528.7L1979.3 528.7L1979.3 619.9Z" fill="#2b2d3a"/>
   <path d="M1873.0 424.6L1872.4 438.6L1869.3 447.9L1866.6 447.9L1866.6 457.1L1863.8 457.1L1863.8 468.3L1862.3 468.3L1862.3 483.1L1860.8 483.1L1860.8 502.6L1859.5 502.6L1859.5 526.8L1861.7 526.8L1861.7 590.6L1884.4 590.6L1884.4 526.8L1886.6 526.8L1886.6 502.6L1885.3 502.6L1885.3 483.1L1883.8 483.1L1883.8 468.3L1882.2 468.3L1882.2 457.1L1879.4 457.1L1879.4 447.9L1876.7 447.9L1873.7 438.6ZM1913.1 430.2L1912.5 445.1L1909.8 455.3L1907.0 455.3L1907.0 461.8L1904.6 461.8L1904.6 473.9L1902.9 473.9L1902.9 488.7L1901.6 488.7L1901.6 507.3L1900.3 507.3L1900.3 526.8L1902.2 526.8L1902.2 590.6L1924.1 590.6L1924.1 526.8L1926.0 526.8L1926.0 507.3L1924.7 507.3L1924.7 488.7L1923.4 488.7L1923.4 473.9L1921.7 473.9L1921.7 461.8L1919.3 461.8L1919.3 455.3L1916.5 455.3L1913.8 445.1Z" fill="#2b2d3a"/>
   <clipPath id="cku"><path d="M1867.9 448.6H1878.1V456.8H1867.9ZM1865.1 457.9H1880.9V467.9H1865.1ZM1863.6 469.0H1882.5V482.8H1863.6ZM1862.1 483.9H1884.0V502.3H1862.1ZM1860.8 503.4H1885.3V526.4H1860.8ZM1908.3 456.0H1918.0V461.4H1908.3ZM1905.9 462.5H1920.4V473.5H1905.9ZM1904.2 474.6H1922.1V488.3H1904.2ZM1902.9 489.5H1923.4V506.9H1902.9ZM1901.6 508.0H1924.7V526.4H1901.6Z"/></clipPath>
   <path d="M1858 447.00H1930M1858 449.62H1930M1858 452.24H1930M1858 454.86H1930M1858 457.48H1930M1858 460.10H1930M1858 462.72H1930M1858 465.34H1930M1858 467.96H1930M1858 470.58H1930M1858 473.20H1930M1858 475.82H1930M1858 478.44H1930M1858 481.06H1930M1858 483.68H1930M1858 486.30H1930M1858 488.92H1930M1858 491.54H1930M1858 494.16H1930M1858 496.78H1930M1858 499.40H1930M1858 502.02H1930M1858 504.64H1930M1858 507.26H1930M1858 509.88H1930M1858 512.50H1930M1858 515.12H1930M1858 517.74H1930M1858 520.36H1930M1858 522.98H1930M1858 525.60H1930" stroke="#ece244" stroke-width="1.750" clip-path="url(#cku)"/>
   <path d="M1871.2 447.9V457.1M1874.9 447.9V457.1M1870.2 457.1V468.3M1875.9 457.1V468.3M1869.6 468.3V483.1M1876.4 468.3V483.1M1869.1 483.1V502.6M1877.0 483.1V502.6M1868.6 502.6V526.8M1877.4 502.6V526.8M1911.4 455.3V461.8M1914.9 455.3V461.8M1910.5 461.8V473.9M1915.7 461.8V473.9M1909.9 473.9V488.7M1916.3 473.9V488.7M1909.5 488.7V507.3M1916.8 488.7V507.3M1909.0 507.3V526.8M1917.3 507.3V526.8" stroke="#2b2d3a" stroke-width="1.700" fill="none"/>
   <rect x="1863.1" y="529.5" width="21.900" height="59" fill="url(#pw)"/>
   <rect x="1903.1" y="529.5" width="21.400" height="59" fill="url(#pw2)"/>
   <rect x="1884.6" y="531.1" width="19.500" height="4" fill="#2b2d3a"/>
   <path d="M1884.9 554.9L1893.6 535.8L1903.9 554.1" stroke="#f0e040" stroke-width="1.100" fill="none"/>
   <path d="M1838.1 594.5L1857.1 600.9L1880.9 592.9L1882.5 588.2L1888.8 584.2L1895.2 583.4L1902.3 585.8L1907.1 589.8L1907.9 592.1L1936.4 594.5L1950.7 589.8L1950.7 608.0L1934.9 617.5L1903.1 612.0L1890.4 611.2L1873.0 617.5L1841.3 617.5L1837.3 613.6Z" fill="#d4834c"/>
   <path d="M1838.1 594.5L1861.1 588.5L1886.5 588.5L1880.9 592.9L1857.1 600.9ZM1907.9 592.1L1906.6 588.5L1926.9 586.6L1950.7 589.8L1936.4 594.5Z" fill="#3b3b49"/>
   <text x="1812.500" y="390.800" font-size="20.700" fill="#fff" font-family="Liberation Sans,sans-serif" textLength="75" lengthAdjust="spacingAndGlyphs">KUALA</text>
   <text x="1812.500" y="415.600" font-size="20.700" fill="#fff" font-family="Liberation Sans,sans-serif" textLength="92.500" lengthAdjust="spacingAndGlyphs">LUMPUR</text>
   <text x="1945" y="394.400" font-size="23" fill="#fff" font-family="Liberation Sans,sans-serif" textLength="25" lengthAdjust="spacingAndGlyphs">53</text>
  </g>
 </svg>
 <svg class="abs" style="left:513px;top:903px" width="444" height="444" viewBox="513 903 444 444">
  <defs><mask id="md" maskUnits="userSpaceOnUse" x="596" y="976" width="278" height="300"><rect x="606.300" y="984.300" width="257" height="281.400" fill="#fff"/><g fill="none" stroke="#000" stroke-width="11.800" stroke-linecap="round" stroke-dasharray="0 18"><path d="M618 984.300H870"/><path d="M606.300 998V1270"/><path d="M863.300 998V1270"/></g></mask>
  <clipPath id="cd"><rect x="624" y="1002" width="221.900" height="250"/></clipPath>
  <clipPath id="cg"><path d="M734.5 1075.6C729.6 1086.8 714.9 1089.3 714.9 1100.6C714.9 1107.9 722.3 1112.2 723.4 1112.8L745.5 1112.8C746.6 1112.2 754.0 1107.9 754.0 1100.6C754.0 1089.3 739.3 1086.8 734.5 1075.6Z"/></clipPath><clipPath id="cbl"><path d="M810.5 1073.9C806.0 1083.3 792.5 1085.4 792.5 1094.8C792.5 1101.4 796.6 1105.2 797.7 1105.8L823.3 1105.8C824.5 1105.2 828.5 1101.4 828.5 1094.8C828.5 1085.4 815.0 1083.3 810.5 1073.9Z"/></clipPath><clipPath id="csg"><path d="M742.9 1137.7C740.1 1143.0 731.8 1144.1 731.8 1149.4C731.8 1155.6 734.8 1159.2 736.0 1159.8L749.9 1159.8C751.1 1159.2 754.1 1155.6 754.1 1149.4C754.1 1144.1 745.7 1143.0 742.9 1137.7Z"/></clipPath>
  </defs>
  <g filter="url(#sh)"><rect x="606.300" y="984.300" width="257" height="281.400" fill="#fffffd" mask="url(#md)"/></g>
  <g clip-path="url(#cd)">
   <rect x="623" y="1001" width="224" height="252" fill="#e6d3ba"/>
   <path d="M788.2 1032.1L784.4 1036.7L784.4 1043.7L783.2 1044.8L784.4 1047.2L783.2 1049.5L775.1 1075.0L772.2 1079.7L770.1 1082.6L771.3 1084.3L768.7 1102.9L768.7 1161.0L809.4 1161.0L809.4 1091.3L804.7 1084.3L803.6 1079.7L801.8 1078.5L800.6 1075.0L793.1 1049.5L791.9 1047.2L793.1 1044.8L791.9 1043.7L791.9 1036.7Z" fill="#e05a3a"/>
   <path d="M788.2 1018.7L787.5 1020.5L787.5 1024.5C784.4 1026.3 781.5 1029.7 782.1 1033.2C782.4 1035.0 784.4 1036.1 785.0 1035.8L791.7 1035.8C793.1 1036.1 794.8 1034.4 794.8 1032.6C794.8 1029.2 791.9 1026.3 789.1 1024.5L789.1 1020.5Z" fill="#f2e03a"/>
   <path d="M784.4 1036.9C785.0 1032.6 791.4 1032.6 791.9 1036.9Z" fill="#e05a3a"/>
   <path d="M722.3 1111.0C728.1 1102.9 740.8 1102.9 747.2 1111.0L746.1 1126.1L751.3 1131.9L751.3 1161.0L718.8 1161.0L718.8 1131.9L724.0 1126.1Z" fill="#e05a3a"/>
   <path d="M796.0 1106.4C802.4 1100.0 818.6 1100.0 825.0 1106.4L825.0 1119.2L832.6 1126.1L837.2 1140.1L837.2 1161.0L794.8 1161.0L794.8 1126.1L796.0 1119.2Z" fill="#e05a3a"/>
   <path d="M750.1 1136.6L769.9 1133.1L769.9 1161.0L750.1 1161.0Z" fill="#e05a3a"/>
   <g clip-path="url(#cg)"><path d="M734.5 1075.6C729.6 1086.8 714.9 1089.3 714.9 1100.6C714.9 1107.9 722.3 1112.2 723.4 1112.8L745.5 1112.8C746.6 1112.2 754.0 1107.9 754.0 1100.6C754.0 1089.3 739.3 1086.8 734.5 1075.6Z" fill="#fdfdfa"/>
   <path d="M734.1 1075.0C729.5 1083.2 717.0 1090.1 715.9 1102.9M737.8 1079.9C733.2 1088.0 724.9 1092.7 723.8 1105.5M741.5 1084.8C736.9 1092.9 732.8 1095.2 731.7 1108.0M745.3 1089.7C740.6 1097.8 740.7 1097.8 739.6 1110.6M749.0 1094.5C744.3 1102.7 748.6 1100.3 747.5 1113.1M752.7 1099.4C748.0 1107.5 756.5 1102.9 755.4 1115.7" fill="none" stroke="#4a8740" stroke-width="3.900"/></g>
   <g clip-path="url(#cbl)"><path d="M810.5 1073.9C806.0 1083.3 792.5 1085.4 792.5 1094.8C792.5 1101.4 796.6 1105.2 797.7 1105.8L823.3 1105.8C824.5 1105.2 828.5 1101.4 828.5 1094.8C828.5 1085.4 815.0 1083.3 810.5 1073.9Z" fill="#fdfdfa"/>
   <path d="M810.5 1073.3C802.4 1082.0 793.4 1091.3 796.7 1106.4M810.5 1073.3C805.0 1082.0 798.9 1091.3 801.1 1106.4M810.5 1073.3C807.7 1082.0 804.7 1091.3 805.8 1106.4M810.5 1073.3C810.5 1082.0 810.5 1091.3 810.5 1106.4M810.5 1073.3C813.3 1082.0 816.4 1091.3 815.3 1106.4M810.5 1073.3C816.0 1082.0 822.1 1091.3 819.9 1106.4M810.5 1073.3C818.6 1082.0 827.6 1091.3 824.3 1106.4" fill="none" stroke="#1c62a0" stroke-width="2.500"/></g>
   <path d="M734.2 1068.6V1076.2M732.0 1070.2H736.4" stroke="#f2e03a" stroke-width="1.600"/><path d="M810.8 1066.9V1074.1M808.6 1068.5H813.0" stroke="#f2e03a" stroke-width="1.600"/><path d="M759.4 1104.6V1109.9M757.2 1106.2H761.6" stroke="#f2e03a" stroke-width="1.600"/><path d="M770.6 1102.9V1108.7M768.4 1104.5H772.8" stroke="#f2e03a" stroke-width="1.600"/><path d="M742.7 1133.7V1138.3M740.5 1135.3H744.9" stroke="#f2e03a" stroke-width="1.600"/>
   <clipPath id="czz"><path d="M759.4 1109.3C755.9 1118.0 746.6 1123.8 744.3 1130.8C745.5 1134.8 751.3 1134.8 753.6 1133.1C758.3 1136.0 765.2 1136.0 769.9 1131.9C768.7 1123.8 762.9 1118.0 759.4 1109.3Z"/></clipPath><path d="M759.4 1109.3C755.9 1118.0 746.6 1123.8 744.3 1130.8C745.5 1134.8 751.3 1134.8 753.6 1133.1C758.3 1136.0 765.2 1136.0 769.9 1131.9C768.7 1123.8 762.9 1118.0 759.4 1109.3Z" fill="#c21d1d"/>
   <path d="M743.2 1114.5L745.9 1117.1L748.7 1114.5L751.5 1117.1L754.3 1114.5L757.1 1117.1L759.9 1114.5L762.7 1117.1L765.5 1114.5L768.2 1117.1L771.0 1114.5M743.2 1119.7L745.9 1122.3L748.7 1119.7L751.5 1122.3L754.3 1119.7L757.1 1122.3L759.9 1119.7L762.7 1122.3L765.5 1119.7L768.2 1122.3L771.0 1119.7M743.2 1125.0L745.9 1127.5L748.7 1125.0L751.5 1127.5L754.3 1125.0L757.1 1127.5L759.9 1125.0L762.7 1127.5L765.5 1125.0L768.2 1127.5L771.0 1125.0M743.2 1130.2L745.9 1132.7L748.7 1130.2L751.5 1132.7L754.3 1130.2L757.1 1132.7L759.9 1130.2L762.7 1132.7L765.5 1130.2L768.2 1132.7L771.0 1130.2" fill="none" stroke="#fff" stroke-width="1.300" clip-path="url(#czz)"/>
   <path d="M770.6 1108.1C768.7 1114.5 759.4 1118.0 760.8 1124.4C761.7 1127.3 766.4 1128.5 768.7 1126.7C772.2 1126.1 774.5 1126.1 778.6 1128.5C782.1 1126.1 783.2 1121.5 779.2 1117.4C775.7 1114.5 772.2 1113.4 770.6 1108.1Z" fill="#c22424"/>
   <path d="M762.9 1126.1C764.1 1120.3 768.7 1114.5 771.3 1109.9M768.1 1126.1C769.3 1120.3 771.8 1114.5 771.3 1109.9M773.4 1126.1C774.5 1120.3 775.0 1114.5 771.3 1109.9" fill="none" stroke="#1f7f7a" stroke-width="1.900"/>
   <path d="M718.3 1136.0A4.2 4.2 0 0 1 726.7 1136.0ZM725.6 1136.0A4.2 4.2 0 0 1 734.0 1136.0ZM735.3 1136.0A4.2 4.2 0 0 1 743.6 1136.0ZM796.0 1127.3A4.6 4.6 0 0 1 805.3 1127.3ZM805.5 1127.3A4.6 4.6 0 0 1 814.8 1127.3ZM815.7 1127.3A4.6 4.6 0 0 1 825.0 1127.3Z" fill="#fff"/>
   <path d="M720.2 1141.8L728.6 1161.0L735.0 1141.8M797.7 1161.0L803.6 1136.0L809.4 1161.0L815.2 1136.0L821.0 1161.0L824.5 1136.0L829.1 1161.0" fill="none" stroke="#fff" stroke-width="1.300"/>
   <path d="M755.9 1147.6A3.500 3.800 0 0 1 762.9 1147.6M762.9 1147.6A3.500 3.800 0 0 1 769.9 1147.6M769.9 1147.6A3.500 3.800 0 0 1 776.8 1147.6M776.8 1147.6A3.500 3.800 0 0 1 783.8 1147.6M759.4 1151.7A3.500 3.800 0 0 1 766.4 1151.7M766.4 1151.7A3.500 3.800 0 0 1 773.4 1151.7M773.4 1151.7A3.500 3.800 0 0 1 780.3 1151.7M780.3 1151.7A3.500 3.800 0 0 1 787.3 1151.7M755.9 1155.7A3.500 3.800 0 0 1 762.9 1155.7M762.9 1155.7A3.500 3.800 0 0 1 769.9 1155.7M769.9 1155.7A3.500 3.800 0 0 1 776.8 1155.7M776.8 1155.7A3.500 3.800 0 0 1 783.8 1155.7M759.4 1159.8A3.500 3.800 0 0 1 766.4 1159.8M766.4 1159.8A3.500 3.800 0 0 1 773.4 1159.8M773.4 1159.8A3.500 3.800 0 0 1 780.3 1159.8M780.3 1159.8A3.500 3.800 0 0 1 787.3 1159.8" fill="none" stroke="#fff" stroke-width="1.100"/>
   <g clip-path="url(#csg)"><path d="M742.9 1137.7C740.1 1143.0 731.8 1144.1 731.8 1149.4C731.8 1155.6 734.8 1159.2 736.0 1159.8L749.9 1159.8C751.1 1159.2 754.1 1155.6 754.1 1149.4C754.1 1144.1 745.7 1143.0 742.9 1137.7Z" fill="#4a8740"/>
   <path d="M742.9 1137.7C738.1 1143.6 733.2 1150.5 734.8 1159.8M742.9 1137.7C740.5 1143.6 738.1 1150.5 738.9 1159.8M742.9 1137.7C742.9 1143.6 742.9 1150.5 742.9 1159.8M742.9 1137.7C745.4 1143.6 747.8 1150.5 747.0 1159.8M742.9 1137.7C747.8 1143.6 752.7 1150.5 751.1 1159.8" fill="none" stroke="#fff" stroke-width=".900"/></g>
   <path d="M688.6 1121.5L678.7 1161.0L698.5 1161.0Z" fill="#453830"/>
   <path d="M688.6 1117.4L686.6 1125.0L690.6 1125.0Z" fill="#e05a3a"/>
   <path d="M688.6 1114.9C685.7 1116.8 686.3 1119.2 687.4 1119.7L689.7 1119.7C690.9 1119.2 691.5 1116.8 688.6 1114.9Z" fill="#4a8740"/>
   <rect x="683.7" y="1143.6" width="1.700" height="3.200" rx=".800" fill="#e05a3a"/><rect x="688.9" y="1143.6" width="1.700" height="3.200" rx=".800" fill="#e05a3a"/><rect x="692.4" y="1143.6" width="1.700" height="3.200" rx=".800" fill="#e05a3a"/><rect x="681.9" y="1151.1" width="1.700" height="3.200" rx=".800" fill="#e05a3a"/><rect x="688.3" y="1151.1" width="1.700" height="3.200" rx=".800" fill="#e05a3a"/><rect x="694.1" y="1151.1" width="1.700" height="3.200" rx=".800" fill="#e05a3a"/>
   <text x="810.500" y="1028.600" font-size="24.400" fill="#333" font-family="Liberation Sans,sans-serif" textLength="26.500" lengthAdjust="spacingAndGlyphs">15</text>
   <text transform="translate(656.200,1175.700) rotate(-90)" font-size="31" fill="#3a332c" font-family="Liberation Sans,sans-serif" textLength="136.600" lengthAdjust="spacingAndGlyphs">MOSCOW</text>
  </g>
 </svg>
 <svg class="abs" style="left:1091px;top:903px" width="444" height="444" viewBox="1091 903 444 444">
  <defs><mask id="me" maskUnits="userSpaceOnUse" x="1204" y="973" width="218" height="300"><rect x="1213.800" y="981.600" width="198.200" height="287" fill="#fff"/><g fill="none" stroke="#000" stroke-width="11.800" stroke-linecap="round" stroke-dasharray="0 18"><path d="M1222 981.600H1420"/><path d="M1213.800 995V1270"/><path d="M1412 995V1270"/></g></mask>
  <clipPath id="ce"><rect x="1232.300" y="999.700" width="161.900" height="250"/></clipPath></defs>
  <g filter="url(#sh)"><rect x="1213.800" y="981.600" width="198.200" height="287" fill="#fffffd" mask="url(#me)"/></g>
  <g clip-path="url(#ce)">
   <rect x="1231" y="998" width="165" height="254" fill="#42acd4"/>
   <path d="M1230.1 1121.5L1239.1 1117.4L1239.1 1111.0L1240.6 1111.0L1240.6 1117.4L1263.3 1129.1L1263.3 1161.0L1230.1 1161.0ZM1324.6 1122.7L1340.0 1136.8L1340.0 1144.4L1378.9 1143.8L1379.2 1135.5L1381.1 1135.5L1381.3 1143.8L1384.7 1155.9L1384.7 1161.0L1324.6 1161.0Z" fill="#c8922e"/>
   <g transform="translate(1285.3,1052.7) rotate(-7.600)"><rect x="-25" y="-33" width="49" height="31" fill="#eec478"/><rect x="-28.500" y="-36.500" width="56" height="5" rx="2.500" fill="#eec478"/><path d="M-18.0 -2V-18.500Q-18.0 -25.500 -11.4 -25.500Q-4.8 -25.500 -4.8 -18.500V-2Z" fill="#42acd4"/><path d="M1.5 -2V-18.500Q1.5 -25.500 8.1 -25.500Q14.7 -25.500 14.7 -18.500V-2Z" fill="#42acd4"/><rect x="-33.500" y="0.0" width="67" height="30" fill="#e3ba78"/><rect x="-32" y="5.0" width="1.600" height="22" fill="#42acd4"/><rect x="30.400" y="5.0" width="1.600" height="22" fill="#42acd4"/><path d="M-28.8 27.5V8.5Q-28.8 4.8 -26.2 4.8Q-23.6 4.8 -23.6 8.5V27.5Z" fill="#ffd782"/><path d="M-21.5 27.5V8.5Q-21.5 4.8 -18.9 4.8Q-16.3 4.8 -16.3 8.5V27.5Z" fill="#ffd782"/><path d="M-14.2 27.5V8.5Q-14.2 4.8 -11.6 4.8Q-9.0 4.8 -9.0 8.5V27.5Z" fill="#ffd782"/><path d="M-6.9 27.5V8.5Q-6.9 4.8 -4.3 4.8Q-1.7 4.8 -1.7 8.5V27.5Z" fill="#ffd782"/><path d="M0.4 27.5V8.5Q0.4 4.8 3.0 4.8Q5.6 4.8 5.6 8.5V27.5Z" fill="#ffd782"/><path d="M7.7 27.5V8.5Q7.7 4.8 10.3 4.8Q12.9 4.8 12.9 8.5V27.5Z" fill="#ffd782"/><path d="M15.0 27.5V8.5Q15.0 4.8 17.6 4.8Q20.2 4.8 20.2 8.5V27.5Z" fill="#ffd782"/><path d="M22.3 27.5V8.5Q22.3 4.8 24.9 4.8Q27.5 4.8 27.5 8.5V27.5Z" fill="#ffd782"/><rect x="-36.500" y="-2.9" width="73" height="5.800" rx="2.900" fill="#e3ba78"/><rect x="-33.500" y="30.0" width="67" height="30" fill="#e3ba78"/><rect x="-32" y="35.0" width="1.600" height="22" fill="#42acd4"/><rect x="30.400" y="35.0" width="1.600" height="22" fill="#42acd4"/><path d="M-28.8 57.5V38.5Q-28.8 34.8 -26.2 34.8Q-23.6 34.8 -23.6 38.5V57.5Z" fill="#ffd782"/><path d="M-21.5 57.5V38.5Q-21.5 34.8 -18.9 34.8Q-16.3 34.8 -16.3 38.5V57.5Z" fill="#ffd782"/><path d="M-14.2 57.5V38.5Q-14.2 34.8 -11.6 34.8Q-9.0 34.8 -9.0 38.5V57.5Z" fill="#ffd782"/><path d="M-6.9 57.5V38.5Q-6.9 34.8 -4.3 34.8Q-1.7 34.8 -1.7 38.5V57.5Z" fill="#ffd782"/><path d="M0.4 57.5V38.5Q0.4 34.8 3.0 34.8Q5.6 34.8 5.6 38.5V57.5Z" fill="#ffd782"/><path d="M7.7 57.5V38.5Q7.7 34.8 10.3 34.8Q12.9 34.8 12.9 38.5V57.5Z" fill="#ffd782"/><path d="M15.0 57.5V38.5Q15.0 34.8 17.6 34.8Q20.2 34.8 20.2 38.5V57.5Z" fill="#ffd782"/><path d="M22.3 57.5V38.5Q22.3 34.8 24.9 34.8Q27.5 34.8 27.5 38.5V57.5Z" fill="#ffd782"/><rect x="-36.500" y="27.1" width="73" height="5.800" rx="2.900" fill="#e3ba78"/><rect x="-33.500" y="60.0" width="67" height="30" fill="#e3ba78"/><rect x="-32" y="65.0" width="1.600" height="22" fill="#42acd4"/><rect x="30.400" y="65.0" width="1.600" height="22" fill="#42acd4"/><path d="M-28.8 87.5V68.5Q-28.8 64.8 -26.2 64.8Q-23.6 64.8 -23.6 68.5V87.5Z" fill="#ffd782"/><path d="M-21.5 87.5V68.5Q-21.5 64.8 -18.9 64.8Q-16.3 64.8 -16.3 68.5V87.5Z" fill="#ffd782"/><path d="M-14.2 87.5V68.5Q-14.2 64.8 -11.6 64.8Q-9.0 64.8 -9.0 68.5V87.5Z" fill="#ffd782"/><path d="M-6.9 87.5V68.5Q-6.9 64.8 -4.3 64.8Q-1.7 64.8 -1.7 68.5V87.5Z" fill="#ffd782"/><path d="M0.4 87.5V68.5Q0.4 64.8 3.0 64.8Q5.6 64.8 5.6 68.5V87.5Z" fill="#ffd782"/><path d="M7.7 87.5V68.5Q7.7 64.8 10.3 64.8Q12.9 64.8 12.9 68.5V87.5Z" fill="#ffd782"/><path d="M15.0 87.5V68.5Q15.0 64.8 17.6 64.8Q20.2 64.8 20.2 68.5V87.5Z" fill="#ffd782"/><path d="M22.3 87.5V68.5Q22.3 64.8 24.9 64.8Q27.5 64.8 27.5 68.5V87.5Z" fill="#ffd782"/><rect x="-36.500" y="57.1" width="73" height="5.800" rx="2.900" fill="#e3ba78"/><rect x="-33.500" y="90.0" width="67" height="30" fill="#e3ba78"/><rect x="-32" y="95.0" width="1.600" height="22" fill="#42acd4"/><rect x="30.400" y="95.0" width="1.600" height="22" fill="#42acd4"/><path d="M-28.8 117.5V98.5Q-28.8 94.8 -26.2 94.8Q-23.6 94.8 -23.6 98.5V117.5Z" fill="#ffd782"/><path d="M-21.5 117.5V98.5Q-21.5 94.8 -18.9 94.8Q-16.3 94.8 -16.3 98.5V117.5Z" fill="#ffd782"/><path d="M-14.2 117.5V98.5Q-14.2 94.8 -11.6 94.8Q-9.0 94.8 -9.0 98.5V117.5Z" fill="#ffd782"/><path d="M-6.9 117.5V98.5Q-6.9 94.8 -4.3 94.8Q-1.7 94.8 -1.7 98.5V117.5Z" fill="#ffd782"/><path d="M0.4 117.5V98.5Q0.4 94.8 3.0 94.8Q5.6 94.8 5.6 98.5V117.5Z" fill="#ffd782"/><path d="M7.7 117.5V98.5Q7.7 94.8 10.3 94.8Q12.9 94.8 12.9 98.5V117.5Z" fill="#ffd782"/><path d="M15.0 117.5V98.5Q15.0 94.8 17.6 94.8Q20.2 94.8 20.2 98.5V117.5Z" fill="#ffd782"/><path d="M22.3 117.5V98.5Q22.3 94.8 24.9 94.8Q27.5 94.8 27.5 98.5V117.5Z" fill="#ffd782"/><rect x="-36.500" y="87.1" width="73" height="5.800" rx="2.900" fill="#e3ba78"/><rect x="-33.500" y="120.0" width="67" height="30" fill="#e3ba78"/><rect x="-32" y="125.0" width="1.600" height="22" fill="#42acd4"/><rect x="30.400" y="125.0" width="1.600" height="22" fill="#42acd4"/><path d="M-28.8 147.5V128.5Q-28.8 124.8 -26.2 124.8Q-23.6 124.8 -23.6 128.5V147.5Z" fill="#ffd782"/><path d="M-21.5 147.5V128.5Q-21.5 124.8 -18.9 124.8Q-16.3 124.8 -16.3 128.5V147.5Z" fill="#ffd782"/><path d="M-14.2 147.5V128.5Q-14.2 124.8 -11.6 124.8Q-9.0 124.8 -9.0 128.5V147.5Z" fill="#ffd782"/><path d="M-6.9 147.5V128.5Q-6.9 124.8 -4.3 124.8Q-1.7 124.8 -1.7 128.5V147.5Z" fill="#ffd782"/><path d="M0.4 147.5V128.5Q0.4 124.8 3.0 124.8Q5.6 124.8 5.6 128.5V147.5Z" fill="#ffd782"/><path d="M7.7 147.5V128.5Q7.7 124.8 10.3 124.8Q12.9 124.8 12.9 128.5V147.5Z" fill="#ffd782"/><path d="M15.0 147.5V128.5Q15.0 124.8 17.6 124.8Q20.2 124.8 20.2 128.5V147.5Z" fill="#ffd782"/><path d="M22.3 147.5V128.5Q22.3 124.8 24.9 124.8Q27.5 124.8 27.5 128.5V147.5Z" fill="#ffd782"/><rect x="-36.500" y="117.1" width="73" height="5.800" rx="2.900" fill="#e3ba78"/></g>
   <text x="1340.300" y="1028.500" font-size="27" fill="#fff" font-family="Liberation Sans,sans-serif" textLength="44.500" lengthAdjust="spacingAndGlyphs">50c</text>
  </g>
 </svg>
 <svg class="abs" style="left:1669px;top:903px" width="444" height="444" viewBox="1669 903 444 444">
  <defs><mask id="mf" maskUnits="userSpaceOnUse" x="1720" y="1010" width="342" height="230"><rect x="1729.400" y="1019.200" width="322.600" height="211.600" fill="#fff"/><g fill="none" stroke="#000" stroke-width="11.800" stroke-linecap="round" stroke-dasharray="0 18"><path d="M1739 1019.200H2060"/><path d="M1729.400 1033V1240"/><path d="M2052 1033V1240"/></g></mask>
  <clipPath id="cf"><rect x="1747.800" y="1037.100" width="286.100" height="180"/></clipPath></defs>
  <g filter="url(#sh)"><rect x="1729.400" y="1019.200" width="322.600" height="211.600" fill="#fffffd" mask="url(#mf)"/></g>
  <g clip-path="url(#cf)">
   <rect x="1746" y="1036" width="290" height="184" fill="#68ac2c"/>
   <path d="M1767.3 1152.7L1772.7 1135.0L1785.0 1124.1L1821.8 1108.4L1835.5 1111.8L1838.2 1120.0L1813.6 1130.9L1804.1 1143.2L1797.3 1155.5ZM1779.5 1156.8L1785.0 1147.3L1816.4 1136.4L1827.3 1139.1L1816.4 1152.7L1805.5 1156.8ZM1884.6 1110.5L1921.4 1104.3L1941.8 1094.1L1962.3 1075.0L1965.0 1087.3L1958.2 1100.9L1944.6 1118.6L1915.9 1128.9L1907.7 1124.1L1922.7 1113.2ZM1970.5 1124.1L2007.3 1105.7L2008.0 1117.3L1985.5 1133.6L1973.9 1139.1ZM1876.4 1094.1L1907.7 1084.5L1910.5 1090.0L1881.8 1102.3ZM1862.7 1117.3L1876.4 1106.4L1884.6 1110.5L1868.2 1122.7Z" fill="#5f9f2e" stroke="#5f9f2e" stroke-width="4" stroke-linejoin="round"/>
   <path d="M1819.1 1084.5L1825.2 1078.4L1828.6 1079.8L1832.7 1102.3L1827.3 1107.0L1820.5 1095.5Z" fill="#b6b5b1" stroke="#b6b5b1" stroke-width="1.600" stroke-linejoin="round"/><path d="M1825.9 1083.2L1829.3 1082.5L1832.7 1102.3L1828.6 1106.4Z" fill="#a3a39f" stroke="#a3a39f" stroke-width="1.600" stroke-linejoin="round"/><path d="M1817.7 1098.2L1823.5 1096.1L1828.6 1111.8L1835.5 1143.2L1828.6 1141.1L1821.8 1125.5Z" fill="#a3a39f" stroke="#a3a39f" stroke-width="1.600" stroke-linejoin="round"/><path d="M1817.7 1098.2L1823.5 1096.1L1826.2 1104.3L1820.5 1106.4Z" fill="#c9c7c3" stroke="#c9c7c3" stroke-width="1.600" stroke-linejoin="round"/><path d="M1827.3 1115.2L1835.5 1114.3L1838.9 1143.2L1834.1 1143.9L1828.6 1136.4Z" fill="#7f7f7b" stroke="#7f7f7b" stroke-width="1.600" stroke-linejoin="round"/><path d="M1827.3 1115.2L1835.5 1114.3L1836.1 1118.6L1828.6 1120.0Z" fill="#a3a39f" stroke="#a3a39f" stroke-width="1.600" stroke-linejoin="round"/><path d="M1855.9 1062.7L1864.1 1060.7L1866.8 1072.3L1855.9 1081.8Z" fill="#a3a39f" stroke="#a3a39f" stroke-width="1.600" stroke-linejoin="round"/><path d="M1869.6 1063.4L1874.3 1062.7L1878.4 1075.0L1871.6 1073.6Z" fill="#a3a39f" stroke="#a3a39f" stroke-width="1.600" stroke-linejoin="round"/><path d="M1868.2 1081.8L1876.4 1087.3L1877.1 1106.4L1870.9 1110.5Z" fill="#a3a39f" stroke="#a3a39f" stroke-width="1.600" stroke-linejoin="round"/><path d="M1855.9 1088.6L1868.2 1084.5L1868.9 1117.3L1860.7 1120.0L1855.9 1111.8Z" fill="#7f7f7b" stroke="#7f7f7b" stroke-width="1.600" stroke-linejoin="round"/><path d="M1853.9 1084.5L1870.9 1071.6L1873.4 1075.0L1860.7 1088.6L1854.6 1088.9Z" fill="#b6b5b1" stroke="#b6b5b1" stroke-width="1.600" stroke-linejoin="round"/><path d="M1882.5 1066.8L1894.1 1066.8L1894.1 1091.4L1884.6 1095.7Z" fill="#a3a39f" stroke="#a3a39f" stroke-width="1.600" stroke-linejoin="round"/><path d="M1896.8 1065.5L1906.4 1061.4L1906.4 1087.3L1896.8 1091.0Z" fill="#7f7f7b" stroke="#7f7f7b" stroke-width="1.600" stroke-linejoin="round"/><path d="M1882.5 1060.7L1902.3 1053.2L1906.6 1055.9L1906.6 1060.3L1884.6 1067.8L1882.5 1065.7Z" fill="#b6b5b1" stroke="#b6b5b1" stroke-width="1.600" stroke-linejoin="round"/><path d="M1916.6 1073.6L1922.7 1070.9L1928.9 1073.0L1928.2 1077.7L1920.0 1079.4Z" fill="#c9c7c3" stroke="#c9c7c3" stroke-width="1.600" stroke-linejoin="round"/><path d="M1954.8 1053.9L1965.7 1055.2L1966.4 1075.0L1958.2 1073.6Z" fill="#a3a39f" stroke="#a3a39f" stroke-width="1.600" stroke-linejoin="round"/><path d="M1939.8 1053.9L1950.7 1053.9L1951.6 1090.0L1947.3 1092.0L1940.5 1084.5Z" fill="#c9c7c3" stroke="#c9c7c3" stroke-width="1.600" stroke-linejoin="round"/><path d="M1941.8 1084.5L1945.9 1083.9L1946.2 1095.5L1942.5 1096.8Z" fill="#a3a39f" stroke="#a3a39f" stroke-width="1.600" stroke-linejoin="round"/><path d="M1961.6 1075.0L1970.5 1079.1L1969.4 1110.5L1963.6 1112.1Z" fill="#a3a39f" stroke="#a3a39f" stroke-width="1.600" stroke-linejoin="round"/><path d="M1960.9 1064.1L1969.1 1062.5L1971.8 1075.0L1966.4 1079.4L1960.9 1075.0Z" fill="#c9c7c3" stroke="#c9c7c3" stroke-width="1.600" stroke-linejoin="round"/><path d="M1960.9 1073.6L1966.4 1079.4L1971.8 1075.0L1971.6 1070.9Z" fill="#a3a39f" stroke="#a3a39f" stroke-width="1.600" stroke-linejoin="round"/><path d="M1930.9 1081.8L1937.7 1083.5L1938.6 1106.4L1933.6 1107.2Z" fill="#a3a39f" stroke="#a3a39f" stroke-width="1.600" stroke-linejoin="round"/><path d="M1918.6 1090.0L1930.9 1085.9L1933.9 1094.1L1924.1 1101.2L1918.6 1096.8Z" fill="#c9c7c3" stroke="#c9c7c3" stroke-width="1.600" stroke-linejoin="round"/><path d="M1925.5 1083.9L1936.4 1084.5L1937.7 1088.0L1926.8 1087.3Z" fill="#b6b5b1" stroke="#b6b5b1" stroke-width="1.600" stroke-linejoin="round"/><path d="M1944.6 1103.6L1952.7 1098.2L1957.1 1114.5L1957.1 1128.2L1945.9 1132.6L1943.2 1117.3Z" fill="#c9c7c3" stroke="#c9c7c3" stroke-width="1.600" stroke-linejoin="round"/><path d="M1944.6 1103.6L1948.6 1100.9L1950.7 1125.5L1945.2 1132.6L1943.2 1117.3Z" fill="#a3a39f" stroke="#a3a39f" stroke-width="1.600" stroke-linejoin="round"/><path d="M1947.3 1130.9L1959.8 1127.5L1961.7 1153.4L1948.6 1154.4Z" fill="#7f7f7b" stroke="#7f7f7b" stroke-width="1.600" stroke-linejoin="round"/><path d="M1947.3 1130.9L1959.8 1127.5L1960.2 1131.6L1948.6 1135.0Z" fill="#a3a39f" stroke="#a3a39f" stroke-width="1.600" stroke-linejoin="round"/><path d="M2008.0 1078.4L2014.1 1078.4L2020.2 1086.6L2010.7 1088.0Z" fill="#c9c7c3" stroke="#c9c7c3" stroke-width="1.600" stroke-linejoin="round"/><path d="M2011.4 1090.0L2016.8 1094.1L2016.3 1113.2L2011.4 1114.8Z" fill="#a3a39f" stroke="#a3a39f" stroke-width="1.600" stroke-linejoin="round"/><path d="M2006.6 1100.9L2012.7 1098.2L2012.7 1122.7L2007.3 1125.7Z" fill="#a3a39f" stroke="#a3a39f" stroke-width="1.600" stroke-linejoin="round"/><path d="M1989.6 1140.5L1999.1 1135.3L2015.5 1134.3L2018.5 1137.7L2007.3 1143.5L1995.0 1146.2Z" fill="#c9c7c3" stroke="#c9c7c3" stroke-width="1.600" stroke-linejoin="round"/><path d="M1840.2 1124.1L1850.7 1128.2L1853.5 1152.7L1841.6 1151.6Z" fill="#7f7f7b" stroke="#7f7f7b" stroke-width="1.600" stroke-linejoin="round"/><path d="M1849.8 1128.2L1852.9 1128.9L1854.8 1150.0L1852.1 1152.7Z" fill="#c9c7c3" stroke="#c9c7c3" stroke-width="1.600" stroke-linejoin="round"/><path d="M1855.9 1128.9L1867.5 1132.3L1870.5 1156.1L1857.3 1156.1Z" fill="#7f7f7b" stroke="#7f7f7b" stroke-width="1.600" stroke-linejoin="round"/><path d="M1866.8 1132.3L1868.9 1133.0L1871.6 1156.1L1869.6 1156.1Z" fill="#c9c7c3" stroke="#c9c7c3" stroke-width="1.600" stroke-linejoin="round"/><path d="M1875.0 1135.0L1886.6 1135.0L1891.6 1156.1L1876.4 1156.1Z" fill="#7f7f7b" stroke="#7f7f7b" stroke-width="1.600" stroke-linejoin="round"/><path d="M1885.9 1137.7L1888.0 1137.7L1894.1 1156.1L1891.1 1156.1Z" fill="#c9c7c3" stroke="#c9c7c3" stroke-width="1.600" stroke-linejoin="round"/><path d="M1900.9 1135.7L1912.5 1134.3L1915.5 1156.1L1900.2 1156.1Z" fill="#7f7f7b" stroke="#7f7f7b" stroke-width="1.600" stroke-linejoin="round"/><path d="M1912.1 1134.7L1913.9 1135.0L1916.9 1156.1L1915.1 1156.1Z" fill="#c9c7c3" stroke="#c9c7c3" stroke-width="1.600" stroke-linejoin="round"/><path d="M1924.8 1134.3L1930.9 1131.7L1937.7 1135.0L1940.7 1156.1L1923.4 1156.1Z" fill="#7f7f7b" stroke="#7f7f7b" stroke-width="1.600" stroke-linejoin="round"/><path d="M1841.6 1120.0L1849.1 1118.4L1860.0 1122.7L1883.2 1127.5L1905.0 1127.9L1907.2 1132.3L1903.6 1136.6L1881.8 1135.3L1858.6 1129.8L1845.0 1125.7Z" fill="#b6b5b1" stroke="#b6b5b1" stroke-width="1.600" stroke-linejoin="round"/><path d="M1841.6 1120.0L1849.1 1118.4L1860.0 1122.7L1883.2 1127.5L1905.0 1127.9L1905.7 1130.2L1882.5 1130.2L1858.6 1125.5L1847.7 1121.1Z" fill="#c9c7c3" stroke="#c9c7c3" stroke-width="1.600" stroke-linejoin="round"/>
   <text x="1980" y="1065.700" font-size="27" fill="#fff" font-family="Liberation Sans,sans-serif" textLength="45" lengthAdjust="spacingAndGlyphs">60c</text>
  </g>
 </svg>
 <div id="bottombar"></div>
 <svg class="abs" style="left:500px;top:1180px" width="1700" height="50" viewBox="500 1180 1700 50">
  <g fill="#c0c5cd">
   <path d="M512.500 1187.800H527.500L534 1194.500V1213.300Q534 1215.800 531.500 1215.800H512.500Q510 1215.800 510 1213.300V1190.300Q510 1187.800 512.500 1187.800Z"/>
   <path d="M616 1202.700L644.500 1187.800L640 1212.200L633.600 1210.400L628.500 1215.800L628.200 1207L642 1190.800L625 1204.400Z"/>
   <path d="M721.800 1201.800Q729 1189.600 738 1189.600Q747 1189.600 754.200 1201.800Q747 1214 738 1214Q729 1214 721.800 1201.800Z"/>
   <path d="M834.300 1193.600H836V1192.300H839.600V1193.600H840L842 1190.400Q842.500 1189.600 843.500 1189.600H851.500Q852.500 1189.600 853 1190.400L855 1193.600H857.500Q860 1193.600 860 1196.100V1211.500Q860 1214 857.500 1214H834.300Q831.800 1214 831.800 1211.500V1196.100Q831.800 1193.600 834.300 1193.600Z"/>
  </g>
  <path d="M527.500 1187.800L534 1194.500H529.500Q527.500 1194.500 527.500 1192.500Z" fill="#edf1f5" stroke="#edf1f5" stroke-width=".8"/>
  <path d="M528.300 1188.600L533.200 1193.700H529.600Q528.300 1193.700 528.300 1192.400Z" fill="#c0c5cd"/>
  <path d="M520 1198.200H524V1205H527.600L522 1210.600L516.400 1205H520Z" fill="#edf1f5"/>
  <circle cx="738" cy="1201.800" r="5" fill="none" stroke="#edf1f5" stroke-width="2.400"/>
  <circle cx="845.800" cy="1204" r="5" fill="none" stroke="#edf1f5" stroke-width="2.200"/><circle cx="855" cy="1198.700" r="1.100" fill="#edf1f5"/>
  <rect x="1968" y="1202.900" width="169" height="5.800" rx="2.900" fill="#8e9aa7"/>
  <circle cx="2030" cy="1205.800" r="11.600" fill="#fff" stroke="#8e9aa7" stroke-width="1.500"/>
 </svg>
</div><div id="frame"></div></div>
<svg style="position:absolute;left:0;top:1100px;z-index:-2" width="2200" height="192" viewBox="0 1100 2200 192"><path d="M0 1100H2200V1237C2199 1262 2192 1279 2174 1285.500C2160 1289.500 2140 1291.500 2115 1292H85C60 1291.500 40 1289.500 26 1285C8 1279 1 1262 0 1236Z" fill="#fff"/></svg>
<div class="bd" style="left:10.5px;right:10.5px;height:46px;background:#828282;border-radius:0 0 72px 72px / 0 0 46px 46px"></div>
<div class="bd" style="left:16px;right:16px;height:42px;background:#575757;border-radius:0 0 72px 72px / 0 0 42px 42px"></div>
<div class="bd" style="left:20px;right:20px;height:39px;background:#3c3c3c;border-radius:0 0 72px 72px / 0 0 39px 39px"></div>
<div class="bd" style="left:25px;right:25px;height:35px;background:#2b5c5c;border-radius:0 0 72px 72px / 0 0 35px 35px"></div>
<div class="bd" style="left:27px;right:27px;height:33px;background:#4c4c4c;border-radius:0 0 72px 72px / 0 0 33px 33px"></div>
<div class="bd" style="left:30px;right:30px;height:30px;background:#404040;border-radius:0 0 72px 72px / 0 0 30px 30px"></div>
<div class="bd" style="left:33px;right:33px;height:27px;background:#33335a;border-radius:0 0 72px 72px / 0 0 27px 27px"></div>
<div class="bd" style="left:34px;right:34px;height:26px;background:#355350;border-radius:0 0 72px 72px / 0 0 26px 26px"></div>
<div class="bd" style="left:37px;right:37px;height:23px;background:#3d3d3d;border-radius:0 0 72px 72px / 0 0 23px 23px"></div>
<div class="bd" style="left:39px;right:39px;height:21px;background:#36334a;border-radius:0 0 72px 72px / 0 0 21px 21px"></div>
<div class="bd" style="left:41px;right:41px;height:19px;background:#2f4240;border-radius:0 0 72px 72px / 0 0 19px 19px"></div>
<div class="bd" style="left:44px;right:44px;height:16px;background:#3d3a42;border-radius:0 0 72px 72px / 0 0 16px 16px"></div>
<div class="bd" style="left:46px;right:46px;height:14px;background:#30403e;border-radius:0 0 72px 72px / 0 0 14px 14px"></div>
<div class="bd" style="left:50px;right:50px;height:10px;background:#3a3745;border-radius:0 0 72px 72px / 0 0 10px 10px"></div>
<div class="bd" style="left:51px;right:51px;height:9px;background:#313a3c;border-radius:0 0 72px 72px / 0 0 9px 9px"></div>
<div class="bd" style="left:54px;right:54px;height:6px;background:#31353f;border-radius:0 0 72px 72px / 0 0 6px 6px"></div>
<div class="bd" style="left:56px;right:56px;height:4px;background:#333c3f;border-radius:0 0 72px 72px / 0 0 4px 4px"></div>
<div class="bd" style="left:59px;right:59px;height:1px;background:#262b33;border-radius:0 0 72px 72px / 0 0 1px 1px"></div>
</body></html>
